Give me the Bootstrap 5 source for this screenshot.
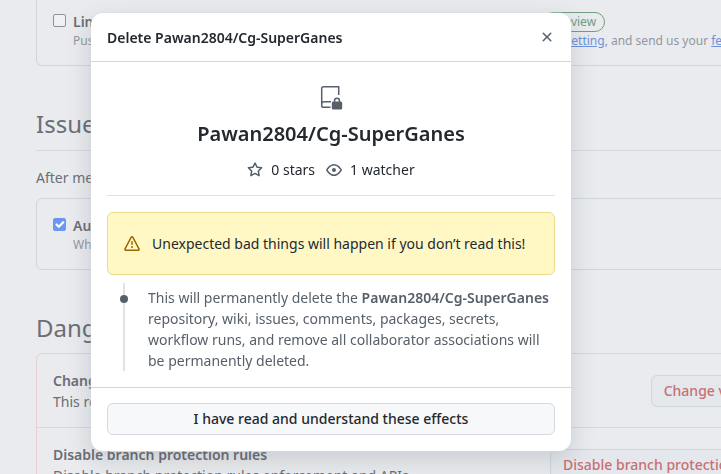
<!DOCTYPE html>
<html lang="en">
<head>
<meta charset="utf-8">
<meta name="viewport" content="width=device-width, initial-scale=1">
<title>Repository settings</title>
<link rel="stylesheet" href="https://cdn.jsdelivr.net/npm/bootstrap@5.3.0/dist/css/bootstrap.min.css">
<style>
  body { font-family: "Noto Sans", sans-serif; font-size: 14px; line-height: 21px; color: #6b6e75; background: #e9ebee; }
  .settings { padding-left: 36px; margin-right: -82px; }
  .panel { border: 1px solid #ced5dd; border-radius: 6px; }
  .push-panel { border-top: 0; border-top-left-radius: 0; padding: 11px 16px 15px; }
  .merge-panel { padding: 16px 16px 15px; }
  .danger-panel { border-color: #e7cfd3; }
  .danger-row { padding: 16px 16px 15px; gap: 16px; }
  .danger-row + .danger-row { border-top: 1px solid #d5d9de; }
  .tick.form-check-input { width: 13px; height: 13px; margin: 3px 7px 0 0; flex: none; border: 1px solid #8f9298; border-radius: 2px; background-color: #eff0f2; }
  .tick.form-check-input:checked { background-color: #6b97f0; border-color: #6b97f0; background-size: 15px; }
  .hint { font-size: 12px; line-height: 18px; color: #92979f; }
  .hint a { color: #6b92dc; }
  .pill { font-size: 12px; line-height: 18px; color: #6f9f7c; border: 1px solid #6f9f7c; border-radius: 20px; padding: 0 8px; margin-left: 13px; }
  .section-title { font-size: 24px; line-height: 36px; font-weight: 400; margin: 40px 0 7px; }
  .ruled { border-bottom: 1px solid #d5d9de; padding-bottom: 8px; }
  .intro { margin: 16px 0 10px; }
  .btn-risk { --bs-btn-font-size: 14px; --bs-btn-line-height: 20px; --bs-btn-padding-y: 5px; --bs-btn-padding-x: 12px; --bs-btn-border-radius: 6px; --bs-btn-font-weight: 500; --bs-btn-color: #c96f73; --bs-btn-bg: #e4e8ec; --bs-btn-border-color: #ced5dc; flex: none; }
  .confirm { max-width: 480px; margin: 13px 0 0 91px; }
  .confirm .modal-content { border: 0; border-radius: 12px; color: #24292f; box-shadow: 0 0 0 1px #d5dade55, 0 8px 24px rgba(66, 74, 83, .2); }
  .confirm .modal-header { padding: 0 16px; height: 49px; border-color: #d0d7de; }
  .confirm .modal-title { font-size: 14px; line-height: 21px; font-weight: 600; }
  .confirm .modal-body { padding: 24px 16px 16px; }
  .confirm .modal-footer { padding: 15px 16px 16px; border-color: #d0d7de; }
  .icon { fill: #57606a; flex: none; }
  .shut { border: 0; background: none; padding: 8px; margin-right: -8px; line-height: 0; }
  .repo-name { font-size: 20px; line-height: 30px; font-weight: 600; margin: 9px 0 10px; }
  .stats { gap: 11px; padding-bottom: 15px; border-bottom: 1px solid #dfe2e6; }
  .caution { margin: 16px 0 8px; padding: 20px 16px; gap: 12px; color: #24292f; background: #fff8c5; border: 1px solid #eadb8d; border-radius: 6px; }
  .caution .icon { fill: #9a6700; }
  .effects { position: relative; margin-left: 16px; padding: 4px 4px 0 23px; border-left: 2px solid #dfe3e8; color: #57606a; }
  .effects::before { content: ""; position: absolute; left: -5px; top: 12px; width: 8px; height: 8px; border-radius: 50%; background: #57606a; }
  .effects strong { font-weight: 600; }
  .btn-accept { --bs-btn-font-size: 14px; --bs-btn-line-height: 20px; --bs-btn-padding-y: 5px; --bs-btn-border-radius: 6px; --bs-btn-font-weight: 500; --bs-btn-color: #24292f; --bs-btn-bg: #f6f8fa; --bs-btn-border-color: #d3d9df; }
</style>
</head>
<body class="overflow-hidden">
<div class="overflow-hidden vh-100">
<main class="settings">
  <section class="panel push-panel d-flex">
    <input class="tick form-check-input" type="checkbox" id="limit">
    <div class="flex-grow-1">
      <div class="d-flex align-items-center">
        <label class="fw-semibold" for="limit">Limit how many branches and tags can be updated in a single push</label>
        <span class="pill">Preview</span>
      </div>
      <div class="hint text-nowrap">Pushes will be rejected if they attempt to update more than this. Learn more about this <a href="#">setting</a>, and send us your <a href="#">feedback</a>.</div>
    </div>
  </section>

  <h2 class="section-title ruled">Issues</h2>
  <p class="intro">After merging a pull request, linked issues can be closed automatically.</p>
  <section class="panel merge-panel d-flex">
    <input class="tick form-check-input" type="checkbox" id="autoclose" checked>
    <div>
      <label class="fw-semibold d-block" for="autoclose">Auto-close issues with merged linked pull requests</label>
      <div class="hint">Whenever linked pull requests merge, auto-close the issue.</div>
    </div>
  </section>

  <h2 class="section-title">Danger Zone</h2>
  <section class="panel danger-panel">
    <div class="danger-row d-flex align-items-center justify-content-between">
      <div><strong class="fw-semibold">Change repository visibility</strong><div>This repository is currently private.</div></div>
      <button class="btn btn-risk" type="button">Change visibility</button>
    </div>
    <div class="danger-row d-flex align-items-center justify-content-between">
      <div><strong class="fw-semibold">Disable branch protection rules</strong><div>Disable branch protection rules enforcement and APIs</div></div>
      <button class="btn btn-risk" type="button">Disable branch protection rules</button>
    </div>
  </section>
</main>
</div>

<div class="modal d-block overflow-hidden" role="dialog" aria-labelledby="confirm-title">
  <div class="modal-dialog confirm">
    <div class="modal-content">
      <div class="modal-header d-flex justify-content-between">
        <h1 class="modal-title" id="confirm-title">Delete Pawan2804/Cg-SuperGanes</h1>
        <button class="shut" type="button" aria-label="Close">
          <svg class="icon" width="16" height="16" viewBox="0 0 16 16"><path d="M3.72 3.72a.75.75 0 0 1 1.06 0L8 6.94l3.22-3.22a.749.749 0 0 1 1.275.326.749.749 0 0 1-.215.734L9.06 8l3.22 3.22a.749.749 0 0 1-.326 1.275.749.749 0 0 1-.734-.215L8 9.06l-3.22 3.22a.751.751 0 0 1-1.042-.018.751.751 0 0 1-.018-1.042L6.94 8 3.72 4.78a.75.75 0 0 1 0-1.06Z"/></svg>
        </button>
      </div>
      <div class="modal-body">
        <div class="text-center">
          <svg class="icon d-block mx-auto" width="24" height="24" viewBox="0 0 24 24">
            <path d="M19.7 9V.8H4.5Q2.7.8 2.7 2.6V19.5Q2.7 21.3 4.5 21.3H11.5M2.9 17.5Q3.2 15.7 5 15.7H12" fill="none" stroke="#57606a" stroke-width="1.5"/>
            <path d="M14.8 15.5V14.6a3.2 3.2 0 0 1 6.4 0v.9h.5a1.5 1.5 0 0 1 1.5 1.5v5a1.5 1.5 0 0 1-1.5 1.5h-7.4a1.5 1.5 0 0 1-1.5-1.5v-5a1.5 1.5 0 0 1 1.5-1.5Zm1.5 0h3.4v-.9a1.7 1.7 0 0 0-3.4 0Z"/>
          </svg>
          <p class="repo-name">Pawan2804/Cg-SuperGanes</p>
        </div>
        <div class="stats d-flex justify-content-center">
          <span class="d-flex align-items-center gap-2">
            <svg class="icon" width="16" height="16" viewBox="0 0 16 16"><path d="M8 .25a.75.75 0 0 1 .673.418l1.882 3.815 4.21.612a.75.75 0 0 1 .416 1.279l-3.046 2.97.719 4.192a.751.751 0 0 1-1.088.791L8 12.347l-3.766 1.98a.75.75 0 0 1-1.088-.79l.72-4.194L.818 6.374a.75.75 0 0 1 .416-1.28l4.21-.611L7.327.668A.75.75 0 0 1 8 .25Zm0 2.445L6.615 5.5a.75.75 0 0 1-.564.41l-3.097.45 2.24 2.184a.75.75 0 0 1 .216.664l-.528 3.084 2.769-1.456a.75.75 0 0 1 .698 0l2.77 1.456-.53-3.084a.75.75 0 0 1 .216-.664l2.24-2.183-3.096-.45a.75.75 0 0 1-.564-.41L8 2.694Z"/></svg>
            0 stars
          </span>
          <span class="d-flex align-items-center gap-2">
            <svg class="icon" width="16" height="16" viewBox="0 0 16 16"><path d="M8 2c1.981 0 3.671.992 4.933 2.078 1.27 1.091 2.187 2.345 2.637 3.023a1.62 1.62 0 0 1 0 1.798c-.45.678-1.367 1.932-2.637 3.023C11.67 13.008 9.981 14 8 14c-1.981 0-3.671-.992-4.933-2.078C1.797 10.83.88 9.576.43 8.898a1.62 1.62 0 0 1 0-1.798c.45-.677 1.367-1.931 2.637-3.022C4.33 2.992 6.019 2 8 2ZM1.679 7.932a.12.12 0 0 0 0 .136c.411.622 1.241 1.75 2.366 2.717C5.176 11.758 6.527 12.5 8 12.5c1.473 0 2.825-.742 3.955-1.715 1.124-.967 1.954-2.096 2.366-2.717a.12.12 0 0 0 0-.136c-.412-.621-1.242-1.75-2.366-2.717C10.824 4.242 9.473 3.5 8 3.5c-1.473 0-2.825.742-3.955 1.715-1.124.967-1.954 2.096-2.366 2.717ZM8 10a2 2 0 1 1-.001-3.999A2 2 0 0 1 8 10Z"/></svg>
            1 watcher
          </span>
        </div>
        <div class="caution d-flex align-items-center" role="alert">
          <svg class="icon" width="16" height="16" viewBox="0 0 16 16"><path d="M6.457 1.047c.659-1.234 2.427-1.234 3.086 0l6.082 11.378A1.75 1.75 0 0 1 14.082 15H1.918a1.75 1.75 0 0 1-1.543-2.575Zm1.763.707a.25.25 0 0 0-.44 0L1.698 13.132a.25.25 0 0 0 .22.368h12.164a.25.25 0 0 0 .22-.368Zm.53 3.996v2.5a.75.75 0 0 1-1.5 0v-2.5a.75.75 0 0 1 1.5 0ZM9 11a1 1 0 1 1-2 0 1 1 0 0 1 2 0Z"/></svg>
          <span>Unexpected bad things will happen if you don’t read this!</span>
        </div>
        <div class="effects">This will permanently delete the <strong>Pawan2804/Cg-SuperGanes</strong> repository, wiki, issues, comments, packages, secrets, workflow runs, and remove all collaborator associations will be permanently deleted.</div>
      </div>
      <div class="modal-footer">
        <button class="btn btn-accept w-100 m-0" type="button">I have read and understand these effects</button>
      </div>
    </div>
  </div>
</div>
<script src="https://cdn.jsdelivr.net/npm/bootstrap@5.3.0/dist/js/bootstrap.bundle.min.js"></script>
</body>
</html>
